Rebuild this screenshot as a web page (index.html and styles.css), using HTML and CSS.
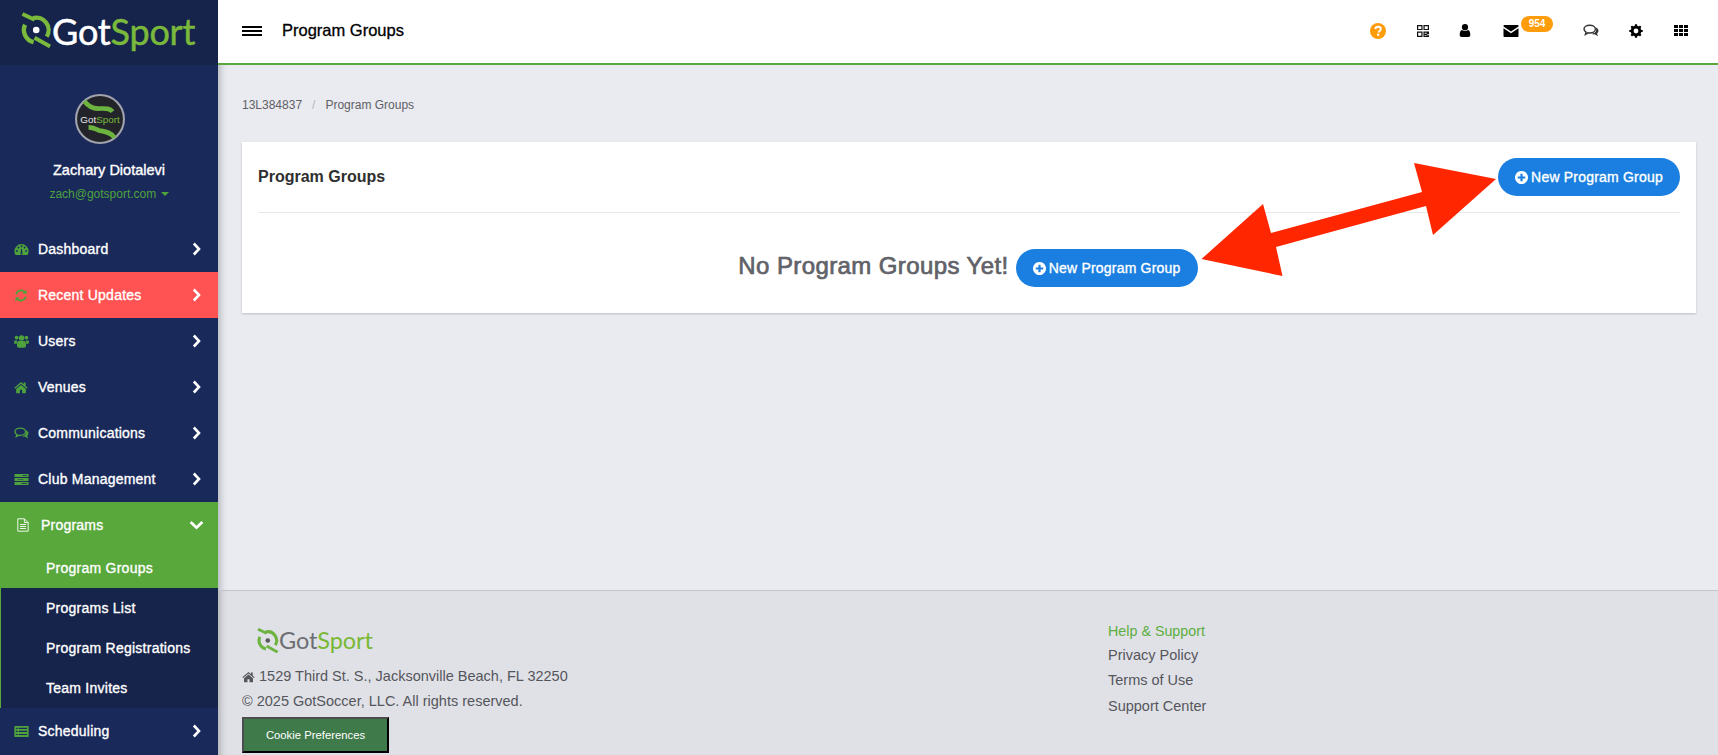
FILE: index.html
```html
<!DOCTYPE html>
<html lang="en">
<head>
<meta charset="utf-8">
<title>Program Groups</title>
<link rel="stylesheet" href="styles.css">
</head>
<body>
<svg class="defs" width="0" height="0" aria-hidden="true">
  <symbol id="mark" viewBox="0 0 32 36">
    <path d="M4.200 12.600A12.700 12.700 0 0 0 13 30.400" class="ring"/>
    <path d="M12.500 5.700A12.700 12.700 0 0 1 26.500 24.800" class="ring"/>
    <path d="M1.500 1.500L14 7.500" class="bar"/>
    <path d="M14 26L30 35" class="bar"/>
    <circle cx="15.700" cy="18" r="3.400" class="dot"/>
  </symbol>
  <symbol id="plus" viewBox="0 0 1536 1536">
    <path fill="currentColor" d="M1216 832v-128q0-26-19-45t-45-19h-256v-256q0-26-19-45t-45-19h-128q-26 0-45 19t-19 45v256h-256q-26 0-45 19t-19 45v128q0 26 19 45t45 19h256v256q0 26 19 45t45 19h128q26 0 45-19t19-45v-256h256q26 0 45-19t19-45zm320-64q0 209-103 385.500t-279.500 279.500-385.500 103-385.500-103-279.500-279.500-103-385.500 103-385.500 279.500-279.500 385.500-103 385.500 103 279.500 279.500 103 385.500z"/>
  </symbol>
  <symbol id="home" viewBox="0 0 16 14">
    <path fill="currentColor" d="M8 .8L.4 7.200l1 1.100L8 2.800l6.600 5.500 1-1.100L13.200 5.200V1.400h-2.200v2L8 .8zM8 4L2.500 8.600v5h4.200V9.700h2.600v3.900h4.200v-5L8 4z"/>
  </symbol>
  <symbol id="chev" viewBox="0 0 9 14">
    <path d="M1.800 1.500L7 7l-5.200 5.500" fill="none" stroke="currentColor" stroke-width="2.600"/>
  </symbol>
  <symbol id="chats" viewBox="0 0 16 14">
    <path fill="none" stroke="currentColor" stroke-width="1.400" d="M6.700 1.200c3.200 0 5.700 1.700 5.700 3.900S9.900 9 6.700 9c-.6 0-1.200-.1-1.700-.2L2.400 10.400l.6-2.300C1.700 7.400 1 6.300 1 5.100 1 2.900 3.500 1.200 6.700 1.200z"/>
    <path fill="currentColor" d="M13.300 3.700c1.300.7 2.200 1.900 2.200 3.100 0 1-.5 1.900-1.400 2.600l.8 2.900-3.300-2c-.7.100-1.600.100-2.500 0l1-1.100c2.800-.3 3.600-2.900 2.700-5.500z"/>
  </symbol>
</svg>

<aside class="sidebar">
  <div class="brand">
    <svg class="brand-mark"><use href="#mark"/></svg>
    <span class="brand-text">Got<span class="brand-accent">Sport</span></span>
  </div>
  <div class="profile">
    <svg class="avatar" viewBox="0 0 48 48">
      <circle cx="24" cy="24" r="23" fill="#22242a" stroke="#a1a3ad" stroke-width="2"/>
      <path d="M9 7c4 5 8 7 13 7 6 0 11-1 14 3" fill="none" stroke="#6db33f" stroke-width="4.500"/>
      <path d="M13 32c4 0 6 1 10 3 5 1 11 1 15 7" fill="none" stroke="#6db33f" stroke-width="4.500"/>
      <text x="24" y="27.500" text-anchor="middle" class="avatar-text">Got<tspan fill="#7ab93c">Sport</tspan></text>
    </svg>
    <div class="user-name">Zachary Diotalevi</div>
    <div class="user-mail">zach@gotsport.com <span class="caret"></span></div>
  </div>
  <nav class="menu">
    <a class="item">
      <svg class="ico" viewBox="0 0 16 14"><path fill="currentColor" d="M8 1.200A7.600 7.600 0 0 0 .4 8.800c0 1.700.5 3 1.300 4.200h12.600c.8-1.200 1.300-2.500 1.300-4.200A7.600 7.600 0 0 0 8 1.200z"/><g class="ico-cut"><circle cx="3" cy="8.500" r="1"/><circle cx="4.700" cy="4.800" r="1"/><circle cx="8" cy="3.500" r="1"/><circle cx="11.300" cy="4.800" r="1"/><circle cx="13" cy="8.500" r="1"/><path d="M7 12.500l.5-6h1l.5 6z"/></g></svg>
      <span class="label">Dashboard</span><svg class="chev"><use href="#chev"/></svg>
    </a>
    <a class="item item-alert">
      <svg class="ico ico-small" viewBox="0 0 14 14"><path fill="none" stroke="currentColor" stroke-width="2" d="M1.800 5.800A5.400 5.400 0 0 1 11.200 3.600M12.200 8.200A5.400 5.400 0 0 1 2.800 10.400"/><path fill="currentColor" d="M13 .6v4.600H8.400zM1 13.400V8.800h4.600z"/></svg>
      <span class="label label-wide">Recent Updates</span><svg class="chev"><use href="#chev"/></svg>
    </a>
    <a class="item">
      <svg class="ico" viewBox="0 0 16 14"><g fill="currentColor"><circle cx="2.700" cy="2.800" r="2"/><circle cx="13.300" cy="2.800" r="2"/><circle cx="8" cy="3.300" r="3"/><path d="M.2 5.800h3.500c-.5.800-.7 2.200-.7 3.600H.2zM15.800 5.800h-3.500c.5.800.7 2.200.7 3.600h2.800z"/><path d="M4.600 6.400h6.800c1.100.6 1.500 2.500 1.500 4.600 0 1.800-.8 2.700-2 2.700H5.100c-1.200 0-2-.9-2-2.700 0-2.100.4-4 1.500-4.600z"/></g></svg>
      <span class="label">Users</span><svg class="chev"><use href="#chev"/></svg>
    </a>
    <a class="item">
      <svg class="ico ico-small"><use href="#home"/></svg>
      <span class="label label-wide">Venues</span><svg class="chev"><use href="#chev"/></svg>
    </a>
    <a class="item">
      <svg class="ico"><use href="#chats"/></svg>
      <span class="label">Communications</span><svg class="chev"><use href="#chev"/></svg>
    </a>
    <a class="item">
      <svg class="ico" viewBox="0 0 16 14"><path fill="currentColor" d="M.5 1h15v3.400h-15zM.5 5.300h15v3.400h-15zM.5 9.600h15v3.400h-15z"/><g class="ico-cut"><path d="M9 2.300h5v.8H9zM4 6.600h6v.8H4zM8 10.900h6v.8H8z"/></g></svg>
      <span class="label">Club Management</span><svg class="chev"><use href="#chev"/></svg>
    </a>
    <a class="item item-open">
      <svg class="ico-file" viewBox="0 0 12 14"><path fill="none" stroke="currentColor" stroke-width=".9" d="M.8.8h6.600l3.800 3.800v8.600H.8zM7.400.8v3.800h3.800"/><path fill="none" stroke="currentColor" stroke-width=".9" d="M3 6.500h6M3 8.500h6M3 10.500h6"/></svg>
      <span class="label label-open">Programs</span>
      <svg class="chev-down" viewBox="0 0 14 9"><path d="M1.500 1.800L7 7l5.500-5.200" fill="none" stroke="currentColor" stroke-width="2.600"/></svg>
    </a>
    <div class="sub">
      <a class="sub-item sub-active">Program Groups</a>
      <a class="sub-item">Programs List</a>
      <a class="sub-item">Program Registrations</a>
      <a class="sub-item">Team Invites</a>
    </div>
    <a class="item">
      <svg class="ico" viewBox="0 0 16 14"><rect x=".3" y="1" width="15.400" height="12" rx="1" fill="currentColor"/><g class="ico-cut"><path d="M2 3h1.800v1.300H2zM5 3h9v1.300H5zM2 6.300h1.800v1.300H2zM5 6.300h9v1.300H5zM2 9.600h1.800v1.300H2zM5 9.600h9v1.300H5z"/></g></svg>
      <span class="label">Scheduling</span><svg class="chev"><use href="#chev"/></svg>
    </a>
  </nav>
</aside>

<div class="main">
  <header class="topbar">
    <div class="burger"><span></span><span></span><span></span></div>
    <h1 class="page-title">Program Groups</h1>
    <div class="tools">
      <svg class="tool tool-help" viewBox="0 0 16 16"><circle cx="8" cy="8" r="8" fill="#ff9c0a"/><path d="M5.300 6.200C5.500 4.600 6.600 3.800 8.100 3.800c1.600 0 2.700 1 2.700 2.200 0 1.900-2.200 1.900-2.200 3.600" fill="none" stroke="#fff" stroke-width="2"/><rect x="7" y="10.700" width="2.300" height="2.100" fill="#fff"/></svg>
      <svg class="tool tool-qr" viewBox="0 0 13 13"><path fill="#111" d="M0 0h6v5.500H0zM7 0h6v5.500H7zM0 7h6v6H0zM7 7h6v3h-2v1h2v2H7z"/><path fill="#fff" d="M1.300 1.300h3.400v2.900H1.300zM8.300 1.300h3.400v2.900H8.300zM1.300 8.300h3.400v3.400H1.300zM8.300 8.300h2.200v1.200H8.300zM8.300 11h2v.8h-2z"/></svg>
      <svg class="tool tool-user" viewBox="0 0 11 13"><circle cx="5.500" cy="3.200" r="3.100" fill="#000"/><path fill="#000" d="M2.500 6c1.500 1.200 4.500 1.200 6 0 1.500.5 2.300 2.200 2.300 4.800 0 1.500-.8 2.200-2 2.200H2.200c-1.200 0-2-.7-2-2.200C.2 8.200 1 6.500 2.500 6z"/></svg>
      <div class="mail">
        <svg class="tool tool-mail" viewBox="0 0 15 12"><path fill="#000" d="M1 0h13c.6 0 1 .4 1 1v.5L7.500 6.600 0 1.500V1c0-.6.4-1 1-1zM0 3.200l7.500 5 7.500-5V11c0 .6-.4 1-1 1H1c-.6 0-1-.4-1-1z"/></svg>
        <span class="badge">954</span>
      </div>
      <svg class="tool tool-chat"><use href="#chats"/></svg>
      <svg class="tool tool-gear" viewBox="0 0 14 14"><circle cx="7" cy="7" r="3.900" fill="none" stroke="#000" stroke-width="3"/><path d="M7 .3v13.400M.3 7h13.400M2.300 2.300l9.400 9.400M11.700 2.300l-9.400 9.400" stroke="#000" stroke-width="2.200" stroke-dasharray="2.400 8.600 2.400" fill="none"/></svg>
      <svg class="tool tool-grid" viewBox="0 0 14 11"><path fill="#000" d="M0 0h4v3H0zM5 0h4v3H5zM10 0h4v3h-4zM0 4h4v3H0zM5 4h4v3H5zM10 4h4v3h-4zM0 8h4v3H0zM5 8h4v3H5zM10 8h4v3h-4z"/></svg>
    </div>
  </header>

  <main class="content">
    <div class="crumbs"><span>13L384837</span><span class="crumb-sep">/</span><span>Program Groups</span></div>
    <section class="card">
      <div class="card-head">
        <h2 class="card-title">Program Groups</h2>
        <a class="btn"><svg class="btn-ico"><use href="#plus"/></svg>New Program Group</a>
      </div>
      <div class="empty">
        <h3 class="empty-title">No Program Groups Yet!</h3>
        <a class="btn"><svg class="btn-ico"><use href="#plus"/></svg>New Program Group</a>
      </div>
    </section>
  </main>

  <footer class="footer">
    <div class="foot-left">
      <div class="foot-brand">
        <svg class="foot-mark"><use href="#mark"/></svg>
        <span class="foot-text">Got<span class="foot-accent">Sport</span></span>
      </div>
      <div class="foot-line"><svg class="foot-home"><use href="#home"/></svg>1529 Third St. S., Jacksonville Beach, FL 32250</div>
      <div class="foot-line">© 2025 GotSoccer, LLC. All rights reserved.</div>
      <button class="cookie">Cookie Preferences</button>
    </div>
    <div class="foot-links">
      <a class="foot-help">Help &amp; Support</a>
      <a>Privacy Policy</a>
      <a>Terms of Use</a>
      <a class="foot-last">Support Center</a>
    </div>
  </footer>
</div>

<svg class="arrows" viewBox="0 0 1718 755" aria-hidden="true">
  <polygon points="1201.500,259 1263,204 1271,233 1422,192 1414,163 1496,179 1433,235 1426,206 1276,247 1282.500,276"/>
</svg>
</body>
</html>
```
FILE: styles.css
```css
* { box-sizing: border-box; }
html, body { height: 100%; }
body {
  margin: 0;
  height: 755px;
  overflow: hidden;
  display: flex;
  position: relative;
  font-family: "Liberation Sans", Arial, sans-serif;
  background: #e9ebf0;
  color: #333;
}
.defs { position: absolute; }
.ring { fill: none; stroke: var(--ring, #7ab93c); stroke-width: 4.500; }
.bar { fill: none; stroke: var(--ring, #7ab93c); stroke-width: 4; }
.dot { fill: var(--dot, #fff); }

/* sidebar */
.sidebar {
  width: 218px;
  flex: none;
  background: #19295a;
  color: #fff;
  display: flex;
  flex-direction: column;
}
.brand {
  height: 65px;
  flex: none;
  background: #16234a;
  display: flex;
  align-items: flex-start;
  padding: 12px 0 0 21px;
}
.brand-mark { width: 31px; height: 36px; flex: none; }
.brand-text {
  font-family: "Lato", sans-serif;
  font-size: 36px;
  line-height: 37px;
  font-weight: 400;
  margin: 1px 0 0 0;
  letter-spacing: -0.2px;
  -webkit-text-stroke: .5px currentColor;
}
.brand-accent { color: #7ab93c; }
.profile {
  height: 161px;
  flex: none;
  padding-top: 30px;
  text-align: center;
}
.avatar { width: 50px; height: 50px; display: block; margin: -1px 0 0 75px; }
.avatar-text { font-family: "Liberation Sans", sans-serif; font-size: 9.500px; fill: #e8e8e8; }
.user-name { font-size: 14.500px; line-height: 18px; margin-top: 17px; -webkit-text-stroke: .35px #fff; }
.user-mail { font-size: 12px; line-height: 16px; color: #4fa33c; margin-top: 7px; }
.caret {
  display: inline-block;
  width: 0;
  height: 0;
  margin-left: 1px;
  vertical-align: 2px;
  border: 4px solid transparent;
  border-top-color: #4fa33c;
  border-bottom: 0;
}
.menu { display: flex; flex-direction: column; }
.item {
  height: 46px;
  flex: none;
  display: flex;
  align-items: center;
  padding: 0 17px 0 14px;
  font-size: 14px;
  color: #fff;
  -webkit-text-stroke: .35px #fff;
  letter-spacing: .22px;
}
.label { flex: 1; margin-left: 9px; }
.label-wide { margin-left: 10px; }
.label-open { margin-left: 12px; }
.ico { width: 15px; height: 13px; color: #4fa33c; flex: none; }
.ico-small { width: 14px; height: 13px; }
.ico-cut { fill: #19295a; }
.chev { width: 9px; height: 14px; flex: none; }
.item-alert { background: #ff5252; }
.item-alert .ico-cut { fill: #ff5252; }
.item-open { background: #58a83c; padding: 0 14px 0 17px; }
.ico-file { width: 12px; height: 14px; flex: none; }
.chev-down { width: 15px; height: 10px; flex: none; }
.sub { background: #16234a; border-left: 1px solid #58a83c; display: flex; flex-direction: column; }
.sub-item {
  height: 40px;
  display: flex;
  align-items: center;
  padding-left: 45px;
  font-size: 14px;
  color: #fff;
  -webkit-text-stroke: .35px #fff;
  letter-spacing: .25px;
}
.sub-active { background: #58a83c; margin-left: -1px; padding-left: 46px; }

/* main column */
.main { flex: 1; min-width: 0; display: flex; flex-direction: column; }
.topbar {
  height: 65px;
  flex: none;
  background: #fff;
  border-bottom: 2px solid #58a83c;
  display: flex;
  align-items: center;
  padding: 0 27px 2px 24px;
}
.burger { width: 20px; display: flex; flex-direction: column; gap: 2px; flex: none; }
.burger span { height: 2px; background: #000; display: block; }
.page-title { font-size: 16.500px; font-weight: 400; margin: 0 0 0 20px; color: #000; -webkit-text-stroke: .3px #000; flex: 1; }
.tools { display: flex; align-items: center; gap: 25px; }
.tool { width: 20px; display: block; flex: none; }
.tool-help { height: 16px; }
.tool-qr { height: 12px; margin-right: -3px; }
.tool-user { height: 13px; }
.tool-mail { height: 12px; }
.tool-chat { height: 14px; }
.tool-gear { height: 14px; }
.tool-grid { height: 11px; }
.mail { position: relative; margin-right: 35px; margin-left: 1px; }
.badge {
  position: absolute;
  left: 20px;
  top: -9px;
  width: 32px;
  height: 16px;
  border-radius: 8px;
  background: #ff9c0a;
  color: #fff;
  font-size: 10px;
  font-weight: 700;
  line-height: 16px;
  text-align: center;
}
.content {
  flex: 1;
  min-height: 0;
  padding: 32px 22px 0 24px;
  box-shadow: inset 9px 0 8px -8px rgba(0, 0, 0, .3);
}
.crumbs { font-size: 12px; line-height: 16px; color: #5f6066; display: flex; }
.crumb-sep { color: #b5b6bb; margin: 0 10px; }
.card {
  margin-top: 29px;
  height: 171px;
  background: #fff;
  padding: 0 16px;
  box-shadow: 0 1px 2px rgba(0, 0, 0, .2);
}
.card-head {
  height: 71px;
  border-bottom: 1px solid #e7e8ea;
  display: flex;
  align-items: center;
  justify-content: space-between;
}
.card-title { margin: 0; font-size: 16px; font-weight: 700; color: #2f2f2f; }
.btn {
  width: 182px;
  height: 38px;
  border-radius: 19px;
  background: #1a7fe0;
  color: #fff;
  font-size: 14px;
  letter-spacing: .2px;
  -webkit-text-stroke: .35px #fff;
  display: flex;
  align-items: center;
  justify-content: center;
  flex: none;
}
.btn-ico { width: 13px; height: 13px; margin-right: 3px; flex: none; }
.empty { display: flex; align-items: center; justify-content: center; gap: 7px; padding: 36px 2px 0 0; }
.empty-title { margin: -4px 0 0; font-size: 24px; font-weight: 400; color: #616268; -webkit-text-stroke: .7px #616268; letter-spacing: .4px; }
.footer {
  height: 165px;
  flex: none;
  background: #e0e1e6;
  border-top: 1px solid #c6c7cc;
  box-shadow: inset 9px 0 8px -8px rgba(0, 0, 0, .3);
  display: flex;
  padding-left: 24px;
  color: #55565c;
  font-size: 14.500px;
}
.foot-left { width: 866px; flex: none; display: flex; flex-direction: column; align-items: flex-start; padding-top: 37px; }
.foot-brand { --ring: #6db33f; --dot: #58595f; display: flex; margin-left: 15px; height: 26px; }
.foot-mark { width: 22px; height: 25px; flex: none; }
.foot-text { font-family: "Lato", sans-serif; font-size: 23.500px; line-height: 25px; color: #6d6e73; letter-spacing: -0.100px; }
.foot-accent { color: #78b833; }
.foot-line { line-height: 25px; display: flex; align-items: center; }
.foot-brand + .foot-line { margin-top: 10px; }
.foot-home { width: 13px; height: 12px; margin-right: 4px; flex: none; color: #55565c; }
.cookie {
  width: 147px;
  height: 36px;
  margin-top: 3px;
  background: #3f7a4a;
  color: #fff;
  font-family: inherit;
  font-size: 11.300px;
  padding: 0;
  border: 2px solid;
  border-color: #4d4d4d #000 #000 #4d4d4d;
}
.foot-links { display: flex; flex-direction: column; padding-top: 28px; }
.foot-links a { line-height: 25px; }
.foot-links .foot-help { color: #5cae3f; line-height: 24px; font-size: 14.300px; }
.foot-links .foot-last { margin-top: 1px; }

/* annotation arrows over the page */
.arrows { position: absolute; left: 0; top: 0; width: 1718px; height: 755px; pointer-events: none; }
.arrows polygon { fill: #ff2600; }
```
